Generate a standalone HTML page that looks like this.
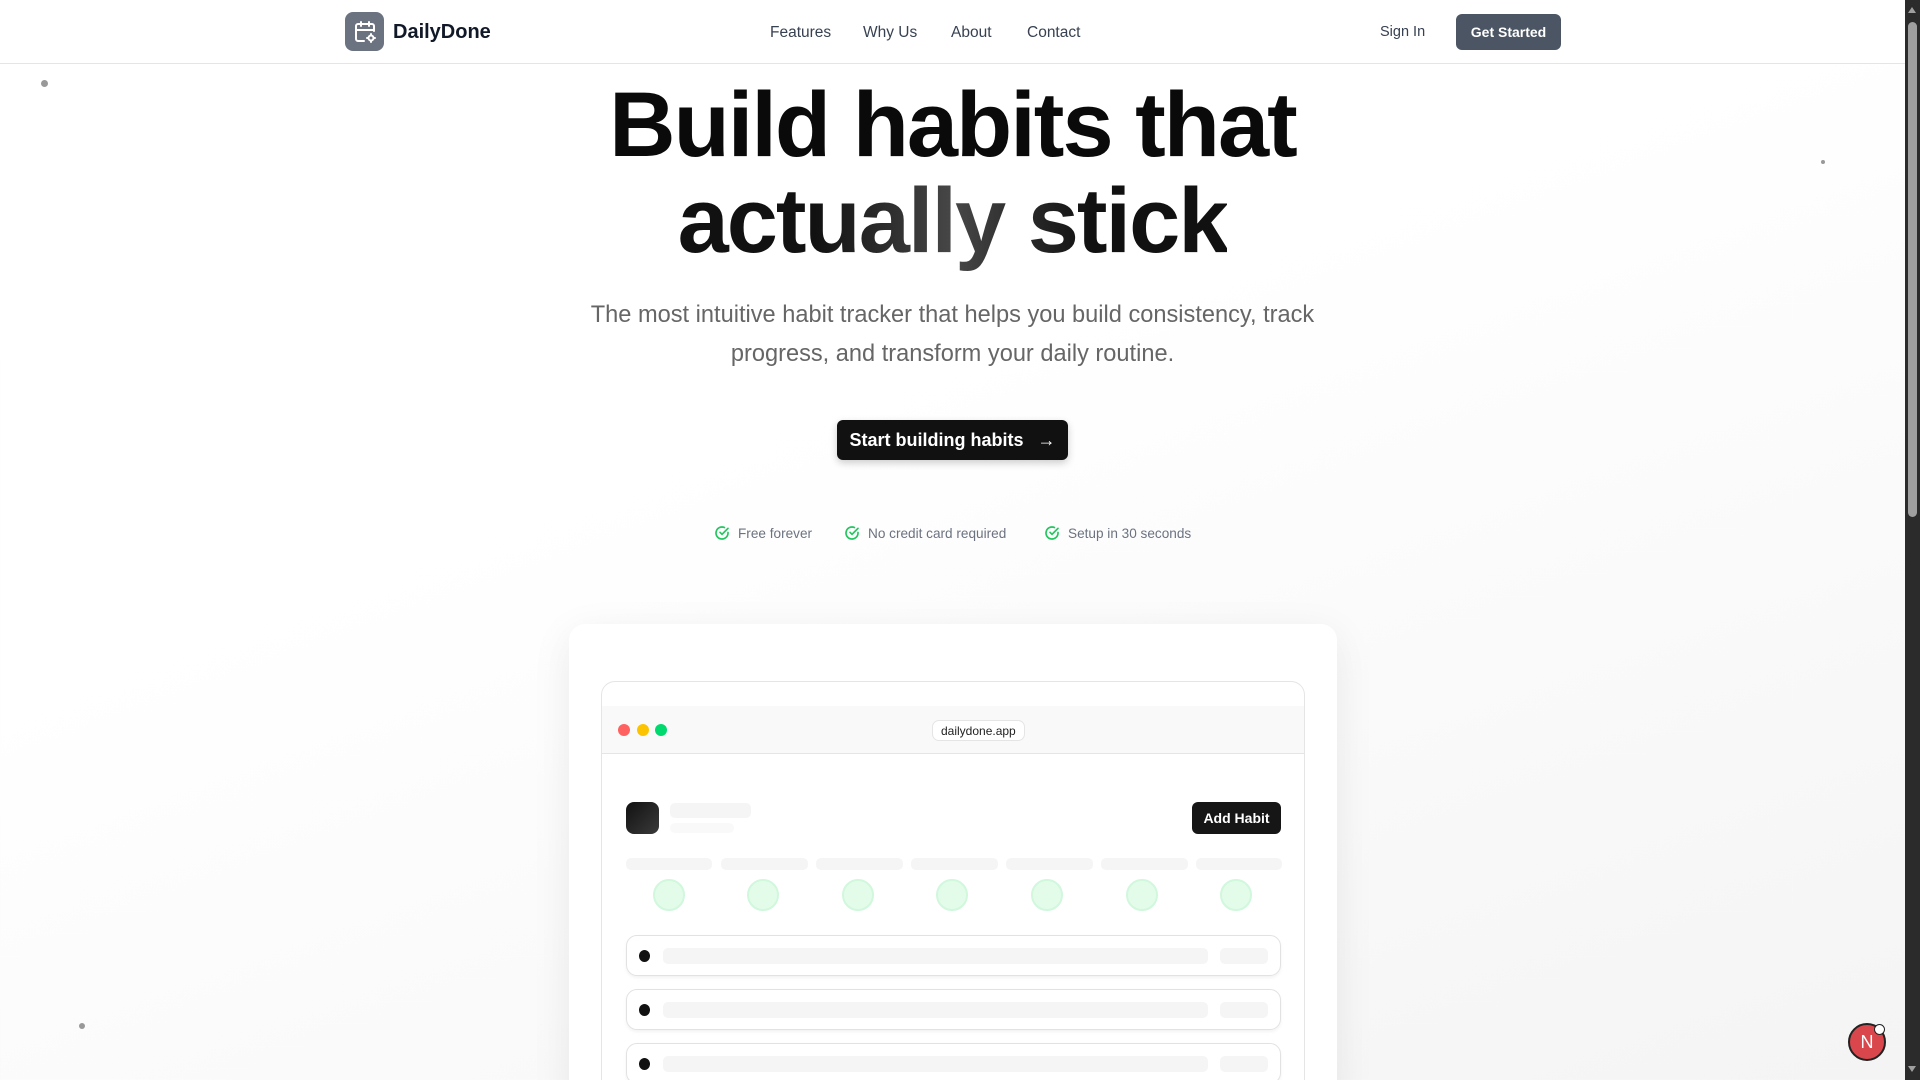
<!DOCTYPE html>
<html style="overflow:hidden;height:1080px"><head><meta charset="utf-8"><style>
*{margin:0;padding:0;box-sizing:border-box}
body{width:1920px;height:1080px;overflow:hidden;font-family:"Liberation Sans",sans-serif;background:linear-gradient(160deg,#fff 40%,#f4f4f4 100%);position:relative}
.a{position:absolute}
nav{position:absolute;left:0;top:0;width:1905px;height:64px;border-bottom:1px solid #e5e5e5;background:#fff}
.logo{left:345px;top:12px;width:39px;height:39px;border-radius:8px;background:#6b7280;display:flex;align-items:center;justify-content:center}
.brand{left:393px;top:21px;font-size:20px;font-weight:bold;color:#111827}
.nl{top:24px;font-size:15.5px;color:#374151}
.btn{left:1456px;top:14px;width:105px;height:36px;border-radius:6px;background:#4b5563;color:#fff;font-size:14px;font-weight:bold;display:flex;align-items:center;justify-content:center}
h1{position:absolute;left:0;width:1905px;text-align:center;font-size:92px;letter-spacing:-2px;line-height:96px;font-weight:bold;top:77px;color:#0a0a0a}
h1 span{background:linear-gradient(90deg,#111 25%,#474747 50%,#111 75%);-webkit-background-clip:text;background-clip:text;color:transparent}
.sub{left:0;width:1905px;top:296px;text-align:center;font-size:23.6px;line-height:39px;color:#666}
.cta{left:837px;top:420px;width:231px;height:40px;border-radius:6px;background:#111;color:#fff;font-size:18px;font-weight:bold;display:flex;align-items:center;justify-content:center;gap:14px;box-shadow:0 3px 8px rgba(0,0,0,.2)}
.chk{top:525px;font-size:13.6px;color:#6b7280;display:flex;align-items:center;gap:8px}
.card{left:569px;top:624px;width:768px;height:480px;background:#fff;border-radius:16px;box-shadow:0 10px 40px rgba(0,0,0,.08)}
.win{left:601px;top:681px;width:704px;height:420px;border:1px solid #e5e5e5;border-radius:14px;background:#fff;overflow:hidden}
.bar{position:absolute;left:0;top:24px;width:100%;height:48px;background:#f9f9f9;border-bottom:1px solid #e5e5e5}
.dot{position:absolute;top:18px;width:12px;height:12px;border-radius:50%}
.url{position:absolute;left:330px;top:14px;height:21px;padding:0 8px;border:1px solid #e5e5e5;border-radius:7px;background:#fff;font-size:12px;line-height:20px;color:#222}
.sk{position:absolute;background:#f5f5f5;border-radius:5px}
.c{position:absolute;width:32px;height:32px;border-radius:50%;background:#e3fcea;border:2px solid #d1f7dd;top:197px}
.row{position:absolute;left:24px;width:655px;height:41px;border:1px solid #e2e2e2;border-radius:11px;box-shadow:0 2px 3px rgba(0,0,0,.05)}
.row i{position:absolute;left:12px;top:14px;width:11px;height:12px;border-radius:50%;background:#111}
.pd{position:absolute;border-radius:50%;background:#999}
</style></head><body>
<nav>
<div class="a logo"><svg width="24" height="24" viewBox="0 0 24 24" fill="none" stroke="#fff" stroke-width="2" stroke-linecap="round"><path d="M16 2v4M8 2v4M3 10h18M11 21H5a2 2 0 0 1-2-2V6a2 2 0 0 1 2-2h14a2 2 0 0 1 2 2v5"/><circle cx="18" cy="18" r="2.5"/><path d="M18 14v1M18 21v1M14 18h1M21 18h1"/></svg></div>
<div class="a brand">DailyDone</div>
<div class="a nl" style="left:770px">Features</div>
<div class="a nl" style="left:863px">Why Us</div>
<div class="a nl" style="left:951px">About</div>
<div class="a nl" style="left:1027px">Contact</div>
<div class="a nl" style="left:1380px;font-size:14.5px;top:24px">Sign In</div>
<div class="a btn">Get Started</div>
</nav>
<h1>Build habits that<br><span>actually stick</span></h1>
<div class="a sub">The most intuitive habit tracker that helps you build consistency, track<br>progress, and transform your daily routine.</div>
<div class="a cta">Start building habits <span style="font-weight:normal">→</span></div>
<div class="a chk" style="left:714px"><svg width="16" height="16" viewBox="0 0 24 24" fill="none" stroke="#22c55e" stroke-width="2.5" stroke-linecap="round"><path d="M21 11.1V12a9 9 0 1 1-5.3-8.2"/><path d="M9 11l3 3 9-9"/></svg>Free forever</div>
<div class="a chk" style="left:844px"><svg width="16" height="16" viewBox="0 0 24 24" fill="none" stroke="#22c55e" stroke-width="2.5" stroke-linecap="round"><path d="M21 11.1V12a9 9 0 1 1-5.3-8.2"/><path d="M9 11l3 3 9-9"/></svg>No credit card required</div>
<div class="a chk" style="left:1044px"><svg width="16" height="16" viewBox="0 0 24 24" fill="none" stroke="#22c55e" stroke-width="2.5" stroke-linecap="round"><path d="M21 11.1V12a9 9 0 1 1-5.3-8.2"/><path d="M9 11l3 3 9-9"/></svg>Setup in 30 seconds</div>
<div class="a card"></div>
<div class="a win">
<div class="bar"><div class="dot" style="left:16px;background:#ff6161"></div><div class="dot" style="left:35px;background:#fcc400"></div><div class="dot" style="left:53px;background:#00d96e"></div><div class="url">dailydone.app</div></div>
<div class="a" style="left:24px;top:120px;width:33px;height:32px;border-radius:8px;background:linear-gradient(135deg,#111,#3a3a3a)"></div>
<div class="sk" style="left:68px;top:121px;width:81px;height:15px"></div>
<div class="sk" style="left:68px;top:141px;width:64px;height:10px;background:#f9f9f9"></div>
<div class="a" style="left:590px;top:120px;width:89px;height:32px;border-radius:6px;background:#161616;color:#fff;font-size:14px;font-weight:bold;text-align:center;line-height:32px">Add Habit</div>
<div class="sk" style="left:24px;top:176px;width:86px;height:12px"></div>
<div class="sk" style="left:119px;top:176px;width:87px;height:12px"></div>
<div class="sk" style="left:214px;top:176px;width:87px;height:12px"></div>
<div class="sk" style="left:309px;top:176px;width:87px;height:12px"></div>
<div class="sk" style="left:404px;top:176px;width:87px;height:12px"></div>
<div class="sk" style="left:499px;top:176px;width:87px;height:12px"></div>
<div class="sk" style="left:594px;top:176px;width:86px;height:12px"></div>
<div class="c" style="left:51px"></div><div class="c" style="left:145px"></div><div class="c" style="left:240px"></div><div class="c" style="left:334px"></div><div class="c" style="left:429px"></div><div class="c" style="left:524px"></div><div class="c" style="left:618px"></div>
<div class="row" style="top:253px"><i></i><div class="sk" style="left:36px;top:12px;width:545px;height:16px"></div><div class="sk" style="left:593px;top:12px;width:48px;height:16px"></div></div>
<div class="row" style="top:307px"><i></i><div class="sk" style="left:36px;top:12px;width:545px;height:16px"></div><div class="sk" style="left:593px;top:12px;width:48px;height:16px"></div></div>
<div class="row" style="top:361px"><i></i><div class="sk" style="left:36px;top:12px;width:545px;height:16px"></div><div class="sk" style="left:593px;top:12px;width:48px;height:16px"></div></div>
</div>
<div class="pd" style="left:41px;top:80px;width:7px;height:7px"></div>
<div class="pd" style="left:1821px;top:160px;width:4px;height:4px"></div>
<div class="pd" style="left:79px;top:1023px;width:6px;height:6px"></div>
<div class="a" style="left:1848px;top:1023px;width:38px;height:38px;border-radius:50%;background:#d9474c;border:2px solid #222;color:#fff;font-size:18px;text-align:center;line-height:34px">N</div>
<div class="a" style="left:1874px;top:1024px;width:11px;height:11px;border-radius:50%;background:#fff;border:1px solid #222"></div>
<div class="a" style="left:1905px;top:0;width:15px;height:1080px;background:#2b2b2b"></div>
<div class="a" style="left:1908px;top:22px;width:9px;height:495px;border-radius:5px;background:#9f9f9f"></div>
<div class="a" style="left:1908px;top:7px;width:0;height:0;border-left:4.5px solid transparent;border-right:4.5px solid transparent;border-bottom:6px solid #9f9f9f"></div>
<div class="a" style="left:1908px;top:1066px;width:0;height:0;border-left:4.5px solid transparent;border-right:4.5px solid transparent;border-top:6px solid #9f9f9f"></div>
</body></html>
